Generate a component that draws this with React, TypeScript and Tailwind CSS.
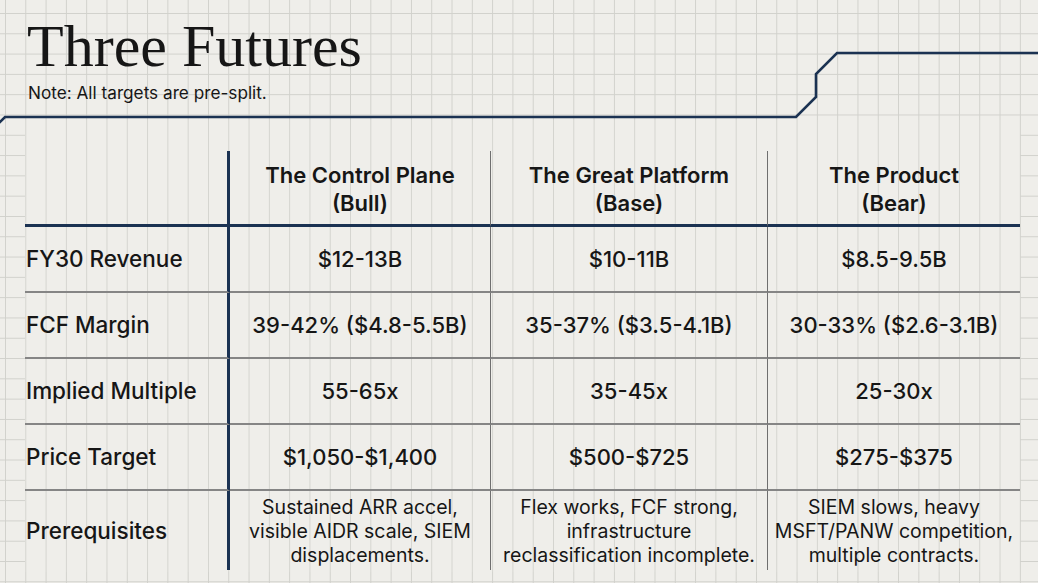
const rows = [
  { label: "FY30 Revenue", cells: ["$12-13B", "$10-11B", "$8.5-9.5B"] },
  { label: "FCF Margin", cells: ["39-42% ($4.8-5.5B)", "35-37% ($3.5-4.1B)", "30-33% ($2.6-3.1B)"] },
  { label: "Implied Multiple", cells: ["55-65x", "35-45x", "25-30x"] },
  { label: "Price Target", cells: ["$1,050-$1,400", "$500-$725", "$275-$375"] },
];

const heads = [
  ["The Control Plane", "(Bull)"],
  ["The Great Platform", "(Base)"],
  ["The Product", "(Bear)"],
];

const prereqs = [
  ["Sustained ARR accel,", "visible AIDR scale, SIEM", "displacements."],
  ["Flex works, FCF strong,", "infrastructure", "reclassification incomplete."],
  ["SIEM slows, heavy", "MSFT/PANW competition,", "multiple contracts."],
];

// column borders: label col gets the heavy navy rule, next two get thin gray
const colBorder = [
  "border-r-[3px] border-r-[#1b3252]",
  "border-r border-r-[#6f6f6f]",
  "border-r border-r-[#6f6f6f]",
  "",
];

export default function App() {
  return (
    <div
      className="relative w-[1038px] h-[583px] overflow-hidden bg-[#efeeea] bg-[linear-gradient(to_right,#d1d1cc_1px,transparent_1px),linear-gradient(to_bottom,#d1d1cc_1px,transparent_1px)] bg-[size:20.3px_20.3px] bg-[position:5px_13px] bg-fixed text-[#161616]"
      style={{ fontFamily: "Inter, 'Liberation Sans', sans-serif" }}
    >
      {/* stepped rule behind the heading */}
      <svg className="absolute left-0 top-0" width="1038" height="140" viewBox="0 0 1038 140" fill="none">
        <path
          d="M-2 124 L5 117 L796 117 L816 97 L816 74 L837 53 L1040 53"
          stroke="#1b3252"
          strokeWidth="2.6"
          strokeLinejoin="miter"
        />
      </svg>

      <h1
        className="relative pl-[27px] pt-[16px] text-[60px] leading-none font-normal"
        style={{ fontFamily: "'Liberation Serif', 'DejaVu Serif', serif" }}
      >
        Three Futures
      </h1>
      <p className="relative pl-[28px] mt-2 text-[17.2px] leading-[17px]">Note: All targets are pre-split.</p>

      <div className="relative mt-[19px] ml-[25px] w-[995px] pt-[31px] pb-[2px] bg-[#efeeea] bg-[linear-gradient(to_right,#d4d4cf_1px,transparent_1px)] bg-[size:20.3px_20.3px] bg-[position:5px_13px] bg-fixed">
        <div className="grid grid-cols-[205px_261px_277px_252px]">
          {/* header */}
          <div className={`h-[76px] border-b-[3px] border-b-[#1b3252] ${colBorder[0]}`} />
          {heads.map((h, i) => (
            <div
              key={h[0]}
              className={`h-[76px] pt-[3px] flex flex-col items-center justify-center border-b-[3px] border-b-[#1b3252] text-[22px] leading-[28px] font-semibold text-center ${colBorder[i + 1]}`}
            >
              <span>{h[0]}</span>
              <span>{h[1]}</span>
            </div>
          ))}

          {rows.map((r) => (
            <>
              <div
                key={r.label}
                className={`h-[66px] flex items-center pl-[1px] border-b-2 border-b-[#858585] text-[22.5px] font-medium ${colBorder[0]}`}
              >
                {r.label}
              </div>
              {r.cells.map((c, i) => (
                <div
                  key={r.label + i}
                  className={`h-[66px] flex items-center justify-center border-b-2 border-b-[#858585] text-[22px] font-medium ${colBorder[i + 1]}`}
                >
                  {c}
                </div>
              ))}
            </>
          ))}

          <div className={`h-[79px] flex items-center pl-[1px] text-[22.5px] font-medium ${colBorder[0]}`}>
            Prerequisites
          </div>
          {prereqs.map((lines, i) => (
            <div
              key={i}
              className={`h-[79px] flex flex-col items-center justify-center text-[19.5px] leading-[24px] text-center ${colBorder[i + 1]}`}
            >
              {lines.map((l) => (
                <span key={l} className="whitespace-nowrap">{l}</span>
              ))}
            </div>
          ))}
        </div>
      </div>
    </div>
  );
}
